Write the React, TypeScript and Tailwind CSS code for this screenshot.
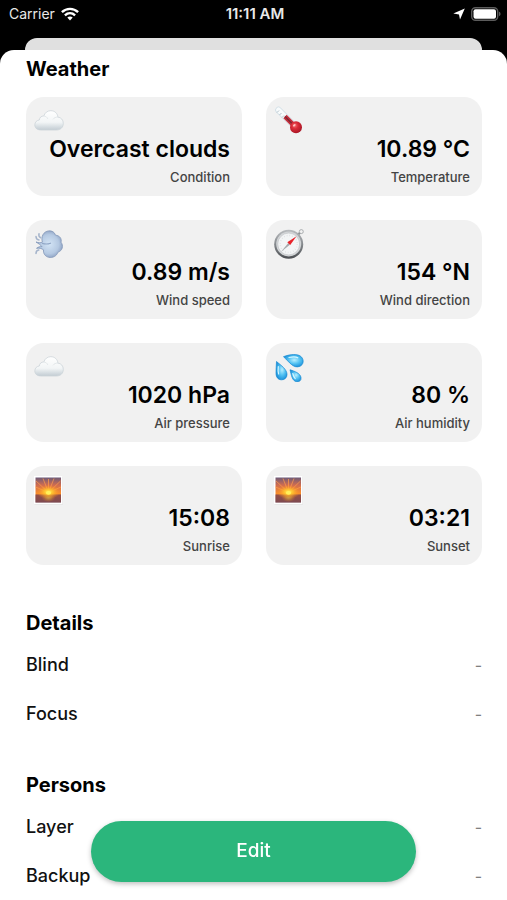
import React from "react";

type IconProps = { id: string };

const CloudIcon = ({ id }: IconProps) => (
  <svg viewBox="0 0 30 30" className="h-[30px] w-[30px]" aria-hidden="true">
    <defs>
      <linearGradient id={id} x1="0" y1="0" x2="0" y2="1">
        <stop offset="0" stopColor="#ffffff" />
        <stop offset="0.6" stopColor="#f2f5f6" />
        <stop offset="1" stopColor="#c2ccd3" />
      </linearGradient>
    </defs>
    <path
      d="M7 24C3 24 .8 21.800.8 18.900c0-2.700 1.900-4.600 4.500-4.900.2-2.500 2.100-4.200 4.500-4 1.200-3.600 3.900-5.300 7.100-5.300 3.800 0 6.700 2.700 7 6.400 3.200.3 5.400 2.800 5.400 6.200 0 4-2.600 6.700-6.800 6.700z"
      fill={`url(#${id})`}
      stroke="#cdd4d9"
      strokeWidth="0.8"
    />
    <path d="M9.800 10c2 .2 3.300 1.200 4 2.900M23.900 11.100c-2.200-.1-3.800.7-4.900 2.200" fill="none" stroke="#dde2e5" strokeWidth="0.8" />
  </svg>
);

const ThermometerIcon = ({ id }: IconProps) => (
  <svg viewBox="0 0 30 30" className="h-[30px] w-[30px]" aria-hidden="true">
    <defs>
      <radialGradient id={id} cx="0.4" cy="0.35" r="0.7">
        <stop offset="0" stopColor="#f46a6e" />
        <stop offset="0.4" stopColor="#d92a36" />
        <stop offset="1" stopColor="#a31425" />
      </radialGradient>
    </defs>
    <path d="M4.500 4 19 18.500" stroke="#cfdde5" strokeWidth="6.400" strokeLinecap="round" />
    <path d="M4.500 4 19 18.500" stroke="#f8fbfc" strokeWidth="5" strokeLinecap="round" />
    <path d="M11 10.500 21 20.500" stroke="#c4303e" strokeWidth="4.600" />
    <path d="m11 10.500 8 8" stroke="#7f2631" strokeWidth="1.600" />
    <path d="m3 6.500 2-2M5.500 9l2-2M8 11.500l2-2" stroke="#9fb0ba" strokeWidth="0.8" />
    <circle cx="22" cy="21.300" r="6" fill={`url(#${id})`} />
    <ellipse cx="20.300" cy="19.300" rx="1.500" ry="1" fill="#ffc4c4" transform="rotate(-40 20.300 19.300)" />
  </svg>
);

const WindIcon = ({ id }: IconProps) => (
  <svg viewBox="0 0 30 30" className="h-[30px] w-[30px]" aria-hidden="true">
    <defs>
      <radialGradient id={id} cx="0.5" cy="0.5" r="0.6">
        <stop offset="0" stopColor="#d3e4f5" />
        <stop offset="0.6" stopColor="#b5c9e2" />
        <stop offset="1" stopColor="#7e92b6" />
      </radialGradient>
    </defs>
    <path
      d="M2 13c2.500.9 4.500.9 6.400.2C6.700 7.500 9.600 2.500 14.600 1.900c3.600-.4 6.100 1.500 6.900 4.300 4.300.3 6.500 3.600 5.500 7 2.700 3.500 1.500 8.700-3 9.900-1.300 4-5.300 6-9.200 5.200-3.800-.8-5.700-4-5.300-7.500-2-1.500-4.400-1.900-7-1.500 1.700-1.300 3.500-1.900 5.500-1.700-1.400-1.700-3.500-3-6-4.600z"
      fill={`url(#${id})`}
      stroke="#8095b8"
      strokeWidth="0.8"
    />
    <path d="M8.500 14.500c3 .8 5.500.7 8-.3" fill="none" stroke="#8fa5c5" strokeWidth="1.200" strokeLinecap="round" />
    <path d="M2 7.500c.1 2 1 3.200 3 3.400M2 24.500c0-2 1-3.200 2.800-3.500M5 4.800c-.5 2 .2 3.300 1.700 4" fill="none" stroke="#a5b4cb" strokeWidth="1.500" strokeLinecap="round" />
  </svg>
);

const CompassIcon = ({ id }: IconProps) => (
  <svg viewBox="0 0 30 30" className="h-[30px] w-[30px]" aria-hidden="true">
    <defs>
      <linearGradient id={id} x1="0" y1="0" x2="0" y2="1">
        <stop offset="0" stopColor="#b9bcbf" />
        <stop offset="0.5" stopColor="#85898d" />
        <stop offset="1" stopColor="#4b4e52" />
      </linearGradient>
    </defs>
    <circle cx="27.300" cy="2.600" r="2" fill="none" stroke="#a4a7aa" strokeWidth="0.9" />
    <path d="m23.700 6 2-2" stroke="#898d90" strokeWidth="2.400" />
    <circle cx="14.700" cy="15.300" r="14.500" fill={`url(#${id})`} />
    <circle cx="14.700" cy="15" r="12.500" fill="#d2d5d7" />
    <circle cx="14.700" cy="15" r="10.900" fill="#f3f5f6" stroke="#b4b7ba" strokeWidth="0.5" />
    <circle cx="14.700" cy="15" r="8.500" fill="none" stroke="#dcdfe1" strokeWidth="1.500" strokeDasharray="0.7 2" />
    <path d="m6.800 23 7.500-8.900 1.600 1.600z" fill="#a5a9ac" />
    <path d="M22.500 7.300 13.300 13.200l2.900 2.900z" fill="#e8232b" />
  </svg>
);

const DropletsIcon = ({ id }: IconProps) => (
  <svg viewBox="0 0 30 30" className="h-[30px] w-[30px]" aria-hidden="true">
    <defs>
      <radialGradient id={id} cx="0.55" cy="0.45" r="0.6">
        <stop offset="0" stopColor="#b8efff" />
        <stop offset="0.5" stopColor="#51c1f2" />
        <stop offset="1" stopColor="#168bd7" />
      </radialGradient>
    </defs>
    <g fill={`url(#${id})`} stroke="#168ad3" strokeWidth="0.7">
      <path d="M9.500 4.700c6.500-2.600 14.500-3.300 17.900.2 3 3.200 2 8.100-1.700 9.500-6.300 2.300-10.200-4.100-16.200-9.700z" />
      <path d="M2.500 9.500c4.800 4 10.500 8 10.500 12.900 0 3.200-2.300 5.400-5.300 5.400-3.500 0-5.600-2.500-5.700-6.400-.1-4 .4-7.800.5-11.900z" />
      <path d="M16 17.800c4.500 1.400 10.400 3.400 11 7.800.4 3-1.700 4.400-4.300 4.100-4.700-.5-5.300-6.900-6.700-11.900z" />
    </g>
    <g fill="none" stroke="#d5f6ff" strokeWidth="1.200" strokeLinecap="round">
      <path d="M15 5.500c3.500-.8 7-.8 8.800.3" />
      <path d="M4.300 14.500c-.3 3-.4 5.500.3 7.500" />
      <path d="M18.800 21.500c.5 2 1.300 4 2.400 5" />
    </g>
  </svg>
);

const SunIcon = ({ id }: IconProps) => (
  <svg viewBox="0 0 30 30" className="h-[30px] w-[30px]" aria-hidden="true">
    <defs>
      <linearGradient id={id} x1="0" y1="0" x2="0" y2="1">
        <stop offset="0" stopColor="#6d5a78" />
        <stop offset="0.3" stopColor="#cf6c50" />
        <stop offset="0.65" stopColor="#f98f2b" />
        <stop offset="0.72" stopColor="#a9583f" />
        <stop offset="1" stopColor="#754a58" />
      </linearGradient>
      <radialGradient id={`${id}-glow`}>
        <stop offset="0" stopColor="#fff35d" />
        <stop offset="0.35" stopColor="#ffc72f" stopOpacity="0.9" />
        <stop offset="1" stopColor="#ff8a20" stopOpacity="0" />
      </radialGradient>
    </defs>
    <path d="M.5 1.500h28.500v28H.5z" fill="#dedede" />
    <path d="M0 1h28.500v28H0z" fill="#fff" />
    <path d="M1.500 2.500h25.500v25H1.500z" fill={`url(#${id})`} />
    <path
      d="M14.500 17.500 1.500 12M14.500 17.500 2 6M14.500 17.500 9 3.500M14.500 17.500V4M14.500 17.500 20 3.500M14.500 17.500 26.500 6M14.500 17.500 27 12"
      fill="none"
      stroke="#ff9c48"
      strokeWidth="1"
      opacity="0.7"
    />
    <path d="M1.500 19.500h25.500v8H1.500z" fill="#84494c" opacity="0.6" />
    <ellipse cx="14.500" cy="17" rx="12" ry="7" fill={`url(#${id}-glow)`} />
    <ellipse cx="14.500" cy="23" rx="7" ry="4" fill={`url(#${id}-glow)`} opacity="0.4" />
    <ellipse cx="14.500" cy="17.800" rx="2.600" ry="1.900" fill="#fff25c" />
  </svg>
);

const WEATHER = [
  { label: "Condition", value: "Overcast clouds", Icon: CloudIcon },
  { label: "Temperature", value: "10.89 °C", Icon: ThermometerIcon },
  { label: "Wind speed", value: "0.89 m/s", Icon: WindIcon },
  { label: "Wind direction", value: "154 °N", Icon: CompassIcon },
  { label: "Air pressure", value: "1020 hPa", Icon: CloudIcon },
  { label: "Air humidity", value: "80 %", Icon: DropletsIcon },
  { label: "Sunrise", value: "15:08", Icon: SunIcon },
  { label: "Sunset", value: "03:21", Icon: SunIcon },
];

const StatusBar = () => (
  <header className="grid h-[38px] grid-cols-3 items-start pt-1 pr-[6px] pl-[9px] text-[14px] leading-5 text-[#e8e8e8]">
    <div className="flex items-center gap-1.5">
      <span>Carrier</span>
      <svg viewBox="0 0 18 14" className="h-[14px] w-[18px]" aria-label="Wi-Fi">
        <g fill="none" stroke="#fff" strokeWidth="2.400">
          <path d="M.9 5.200c4.700-4.500 11.500-4.500 16.200 0" />
          <path d="M3.900 8.400c3-2.800 7.200-2.800 10.200 0" />
        </g>
        <path d="M6.300 10.600c1.600-1.400 3.800-1.400 5.400 0L9 13.500z" fill="#fff" />
      </svg>
    </div>
    <span className="text-center text-[15px] font-semibold whitespace-nowrap">11:11 AM</span>
    <div className="flex h-5 items-center justify-end gap-1.5">
      <svg viewBox="0 0 12 12" className="h-3 w-3" aria-label="Location">
        <path d="M11.800.5 7 11.500 6 6.500.3 5.500z" fill="#fff" />
      </svg>
      <svg viewBox="0 0 30 14" className="h-[14px] w-[30px]" aria-label="Battery">
        <rect x="0.700" y="0.700" width="26" height="12.600" rx="3.800" fill="none" stroke="#5c5c5c" strokeWidth="1.400" />
        <rect x="2.500" y="2.300" width="22.500" height="9.400" rx="2" fill="#fff" />
        <path d="M28 4.800c2 .6 2 3.800 0 4.400z" fill="#5c5c5c" />
      </svg>
    </div>
  </header>
);

const SectionTitle = ({ children }: { children: React.ReactNode }) => (
  <h2 className="text-[20px] leading-[34px] font-bold">{children}</h2>
);

const DetailSection = ({ title, items }: { title: string; items: string[] }) => (
  <section>
    <SectionTitle>{title}</SectionTitle>
    <dl>
      {items.map((item) => (
        <div key={item} className="flex h-[49px] items-center justify-between">
          <dt className="text-[18px] font-medium text-[#111]">{item}</dt>
          <dd className="text-[16px] text-[#808080]">-</dd>
        </div>
      ))}
    </dl>
  </section>
);

const App = () => {
  return (
    <div className="flex min-h-screen flex-col bg-black font-['Inter','Liberation_Sans',sans-serif] text-black">
      <StatusBar />
      <div className="mx-[25px] h-3 rounded-t-[12px] bg-[#e0e0e0]" />
      <main className="flex-1 rounded-t-[14px] bg-white pt-0.5 pr-[25px] pl-[26px]">
        <section className="mb-[41px]">
          <SectionTitle>Weather</SectionTitle>
          <div className="mt-[11px] grid grid-cols-2 gap-6">
            {WEATHER.map(({ label, value, Icon }) => (
              <div key={label} className="rounded-[18px] bg-[#f1f1f1] pt-[9px] pr-3 pb-[11px] pl-2">
                <Icon id={label.replace(" ", "-")} />
                <p className="text-right text-[23px] leading-[26px] font-semibold whitespace-nowrap">{value}</p>
                <p className="mt-[7px] text-right text-[13px] leading-4 font-medium text-[#444]">{label}</p>
              </div>
            ))}
          </div>
        </section>
        <div className="flex flex-col gap-[30px]">
          <DetailSection title="Details" items={["Blind", "Focus"]} />
          <DetailSection title="Persons" items={["Layer", "Backup"]} />
        </div>
      </main>
      {/* Floating action */}
      <div className="pointer-events-none fixed inset-x-0 bottom-[18px] flex justify-center">
        <button
          type="button"
          className="pointer-events-auto h-[61px] w-[64%] rounded-full bg-[#2bb67c] text-[19px] font-medium text-white shadow-[0_2px_5px_rgba(0,0,0,0.25)]"
        >
          Edit
        </button>
      </div>
    </div>
  );
};

export default App;
